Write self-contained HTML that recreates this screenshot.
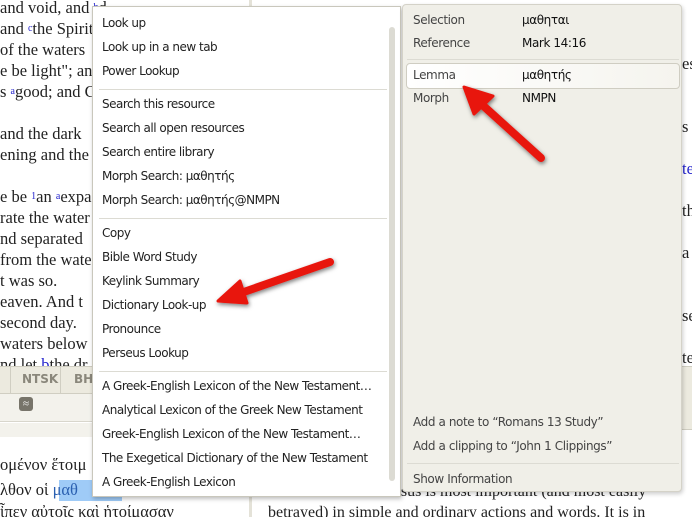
<!DOCTYPE html>
<html><head><meta charset="utf-8"><style>
*{margin:0;padding:0;box-sizing:border-box}
html,body{width:692px;height:517px;overflow:hidden}
body{position:relative;background:#fff;font-family:"Liberation Serif","DejaVu Serif",serif;}
.bt{position:absolute;font-size:16.5px;color:#222;white-space:nowrap;line-height:24px}
.sans{font-family:"DejaVu Sans","Liberation Sans",sans-serif}
#menu{position:absolute;left:92px;top:6px;width:309px;height:491px;background:#fff;border:1px solid #c9c7bc;box-shadow:1px 2px 4px rgba(0,0,0,.25);overflow:hidden}
.mi{position:absolute;left:9px;font-family:"DejaVu Sans","Liberation Sans",sans-serif;font-size:12px;color:#222;white-space:nowrap;letter-spacing:-0.5px}
.sep{position:absolute;left:6px;width:288px;height:1px;background:#dcdbd3}
#panel{position:absolute;left:402px;top:4px;width:280px;height:488px;background:#f0efe8;border:1px solid #d4d2c8;border-radius:4px;box-shadow:1px 2px 4px rgba(0,0,0,.2)}
.pl{position:absolute;font-family:"DejaVu Sans","Liberation Sans",sans-serif;font-size:12px;color:#444;white-space:nowrap;letter-spacing:-0.4px}
.pv{position:absolute;font-family:"DejaVu Sans","Liberation Sans",sans-serif;font-size:12px;color:#111;white-space:nowrap;letter-spacing:-0.4px}
</style></head><body>
<div class="bt" style="left:0;top:-4px">and void, and <span style="color:#22c;font-size:10px;vertical-align:top">b</span>d</div>
<div class="bt" style="left:0;top:17px">and <span style="color:#22c;font-size:10px;vertical-align:top">c</span>the Spirit</div>
<div class="bt" style="left:0;top:38px">of the waters</div>
<div class="bt" style="left:0;top:59px">e be light"; an</div>
<div class="bt" style="left:0;top:80px">s <span style="color:#22c;font-size:10px;vertical-align:top">a</span>good; and G</div>
<div class="bt" style="left:0;top:122px">and the dark</div>
<div class="bt" style="left:0;top:143px">ening and the</div>
<div class="bt" style="left:0;top:185px">e be <span style="color:#22c;font-size:10px;vertical-align:top">1</span>an <span style="color:#22c;font-size:10px;vertical-align:top">a</span>expa</div>
<div class="bt" style="left:0;top:206px">rate the water</div>
<div class="bt" style="left:0;top:227px">nd separated</div>
<div class="bt" style="left:0;top:248px">from the wate</div>
<div class="bt" style="left:0;top:269px">t was so.</div>
<div class="bt" style="left:0;top:290px">eaven. And t</div>
<div class="bt" style="left:0;top:311px">second day.</div>
<div class="bt" style="left:0;top:332px">waters below</div>
<div class="bt" style="left:0;top:353px">nd let <span style="color:#22c">b</span>the dr</div>
<div style="position:absolute;left:0;top:366px;width:250px;height:28px;background:#eceadf;border-top:1px solid #d0cec2;border-bottom:1px solid #d0cec2"></div>
<div style="position:absolute;left:10px;top:366px;width:1px;height:28px;background:#d0cec2"></div>
<div style="position:absolute;left:60px;top:366px;width:1px;height:28px;background:#d0cec2"></div>
<div class="sans" style="position:absolute;left:22px;top:372px;font-size:12px;font-weight:bold;color:#8a877b">NTSK</div>
<div class="sans" style="position:absolute;left:74px;top:372px;font-size:12px;font-weight:bold;color:#8a877b">BH</div>
<div style="position:absolute;left:0;top:394px;width:250px;height:28px;background:#f3f2ec;border-bottom:1px solid #d8d6cc"></div>
<div style="position:absolute;left:19px;top:397px;width:14px;height:14px;background:#77746a;border-radius:3px;color:#fff;font-size:11px;text-align:center;line-height:14px">≈</div>
<div style="position:absolute;left:0;top:423px;width:250px;height:14px;background:#f3f2ec"></div>
<div class="bt" style="left:0;top:453px">ομένον ἕτοιμ</div>
<div style="position:absolute;left:59px;top:480px;width:63px;height:21px;background:#9fcbf7"></div>
<div class="bt" style="left:0;top:478px">λθον οἱ <span style="color:#2a5fb0">μαθ</span></div>
<div class="bt" style="left:0;top:500px">ἶπεν αὐτοῖς καὶ ἡτοίμασαν</div>
<div style="position:absolute;left:249px;top:0;width:3px;height:517px;background:#e4e2d8"></div>
<div class="bt" style="left:682px;top:52px">es</div>
<div class="bt" style="left:682px;top:115px">s a</div>
<div class="bt" style="left:682px;top:157px;color:#22c">te</div>
<div class="bt" style="left:682px;top:199px">th</div>
<div class="bt" style="left:682px;top:241px">a</div>
<div class="bt" style="left:682px;top:304px">se</div>
<div class="bt" style="left:682px;top:346px">te</div>
<div style="position:absolute;left:682px;top:366px;width:10px;height:64px;background:#eceadf;border-top:1px solid #d0cec2;border-bottom:1px solid #d0cec2"></div>
<div class="bt" style="left:268px;top:480px;font-size:16px">faithful witness to Jesus is most important (and most easily</div>
<div class="bt" style="left:268px;top:501px;font-size:16px">betrayed) in simple and ordinary actions and words. It is in</div>
<div id="menu">
<div class="mi" style="top:9px">Look up</div>
<div class="mi" style="top:33px">Look up in a new tab</div>
<div class="mi" style="top:57px">Power Lookup</div>
<div class="sep" style="top:82px"></div>
<div class="mi" style="top:90px">Search this resource</div>
<div class="mi" style="top:114px">Search all open resources</div>
<div class="mi" style="top:138px">Search entire library</div>
<div class="mi" style="top:162px">Morph Search: μαθητής</div>
<div class="mi" style="top:186px">Morph Search: μαθητής@NMPN</div>
<div class="sep" style="top:211px"></div>
<div class="mi" style="top:219px">Copy</div>
<div class="mi" style="top:243px">Bible Word Study</div>
<div class="mi" style="top:267px">Keylink Summary</div>
<div class="mi" style="top:291px">Dictionary Look-up</div>
<div class="mi" style="top:315px">Pronounce</div>
<div class="mi" style="top:339px">Perseus Lookup</div>
<div class="sep" style="top:364px"></div>
<div class="mi" style="top:372px">A Greek-English Lexicon of the New Testament…</div>
<div class="mi" style="top:396px">Analytical Lexicon of the Greek New Testament</div>
<div class="mi" style="top:420px">Greek-English Lexicon of the New Testament…</div>
<div class="mi" style="top:444px">The Exegetical Dictionary of the New Testament</div>
<div class="mi" style="top:468px">A Greek-English Lexicon</div>
<div style="position:absolute;left:296px;top:20px;width:6px;height:454px;background:#dcdbd3;border-radius:3px"></div>
</div>
<div id="panel">
<div class="pl" style="left:10px;top:8px">Selection</div><div class="pv" style="left:119px;top:8px">μαθηται</div>
<div class="pl" style="left:10px;top:31px">Reference</div><div class="pv" style="left:119px;top:31px">Mark 14:16</div>
<div style="position:absolute;left:4px;top:54px;width:272px;height:1px;background:#dcdbd3"></div>
<div style="position:absolute;left:3px;top:58px;width:274px;height:26px;background:linear-gradient(90deg,#fff,#f5f4ee);border:1px solid #cfcdc2;border-radius:4px"></div>
<div class="pl" style="left:10px;top:63px">Lemma</div><div class="pv" style="left:119px;top:63px">μαθητής</div>
<div class="pl" style="left:10px;top:86px">Morph</div><div class="pv" style="left:119px;top:86px">NMPN</div>
<div class="pl" style="left:10px;top:410px">Add a note to “Romans 13 Study”</div>
<div class="pl" style="left:10px;top:434px">Add a clipping to “John 1 Clippings”</div>
<div style="position:absolute;left:4px;top:458px;width:272px;height:1px;background:#dcdbd3"></div>
<div class="pl" style="left:10px;top:467px">Show Information</div>
</div>
<svg style="position:absolute;left:0;top:0" width="692" height="517">
<defs><filter id="s"><feDropShadow dx="1" dy="2" stdDeviation="2" flood-opacity=".5"/></filter></defs>
<g filter="url(#s)" fill="#e8140f" stroke="#e8140f" stroke-linecap="round">
<line x1="541" y1="158" x2="478" y2="101" stroke-width="8"/>
<polygon points="464,87 493,96 474,114" stroke-width="3" stroke-linejoin="round"/>
<line x1="330" y1="262" x2="238" y2="294" stroke-width="8"/>
<polygon points="218,301 240,281 247,303" stroke-width="3" stroke-linejoin="round"/>
</g>
</svg>
</body></html>
